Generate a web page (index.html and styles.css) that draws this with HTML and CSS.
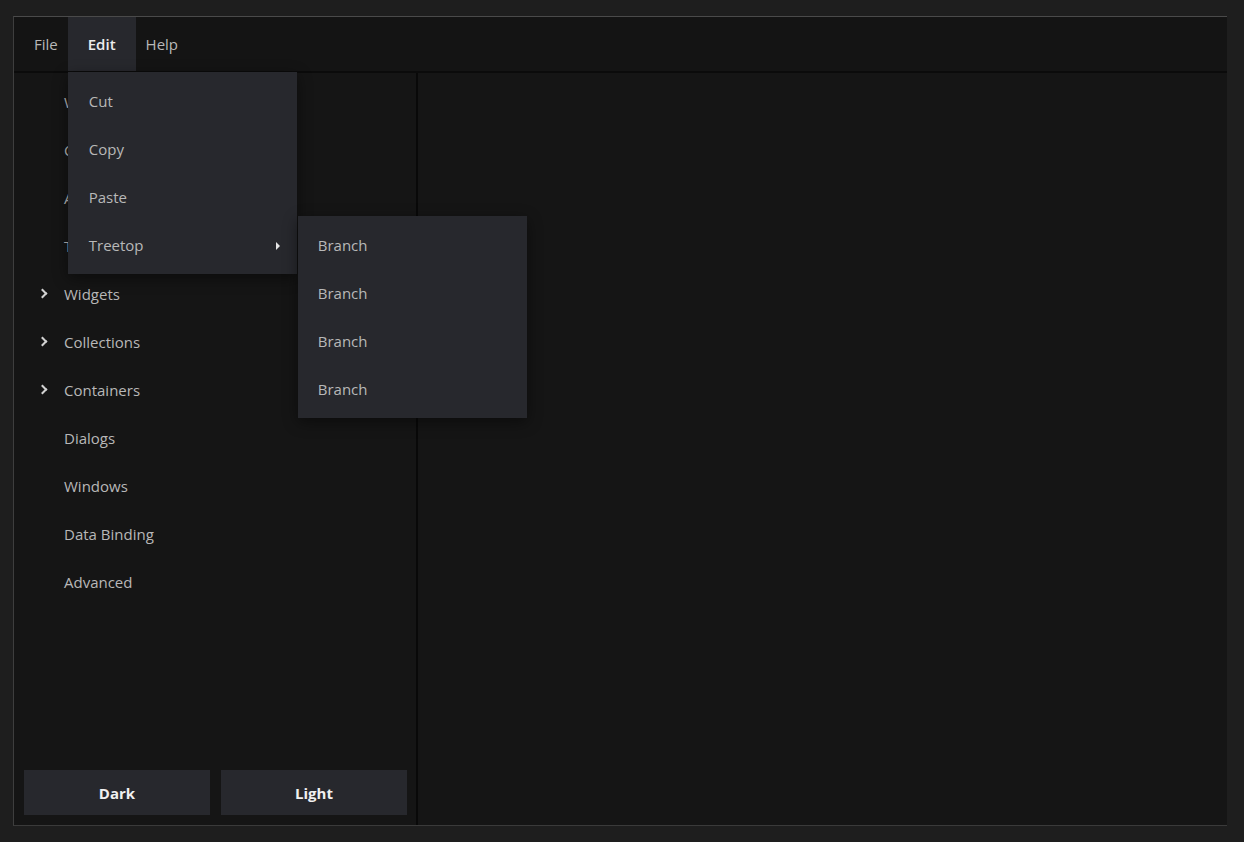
FILE: index.html
```html
<!DOCTYPE html>
<html lang="en">
<head>
    <meta charset="UTF-8">
    <meta name="viewport" content="width=device-width, initial-scale=1.0">
    <title>Gallery</title>
    <link rel="stylesheet" href="styles.css">
</head>
<body>
    <div class="window">
        <div class="menubar">
            <div class="menu-item">File</div>
            <div class="menu-item active">
                Edit
                <div class="dropdown">
                    <div class="drop-item">Cut</div>
                    <div class="drop-item">Copy</div>
                    <div class="drop-item">Paste</div>
                    <div class="drop-item has-sub">
                        Treetop
                        <span class="sub-arrow"></span>
                        <div class="dropdown submenu">
                            <div class="drop-item">Branch</div>
                            <div class="drop-item">Branch</div>
                            <div class="drop-item">Branch</div>
                            <div class="drop-item">Branch</div>
                        </div>
                    </div>
                </div>
            </div>
            <div class="menu-item">Help</div>
        </div>

        <div class="body">
            <div class="sidebar">
                <div class="nav-list">
                    <div class="nav-item">Welcome</div>
                    <div class="nav-item">Controls</div>
                    <div class="nav-item">Animations</div>
                    <div class="nav-item">Typography</div>
                    <div class="nav-item group">Widgets</div>
                    <div class="nav-item group">Collections</div>
                    <div class="nav-item group">Containers</div>
                    <div class="nav-item">Dialogs</div>
                    <div class="nav-item">Windows</div>
                    <div class="nav-item">Data Binding</div>
                    <div class="nav-item">Advanced</div>
                </div>
                <div class="theme-buttons">
                    <button class="theme-btn">Dark</button>
                    <button class="theme-btn">Light</button>
                </div>
            </div>
            <div class="content"></div>
        </div>
    </div>
</body>
</html>
```

FILE: styles.css
```css
body {
    margin: 0;
    background: #1e1e1e;
    padding: 16px 17px 16px 13px;
    font-family: 'Open Sans', 'Noto Sans', sans-serif;
    font-size: 15px;
    color: #b8b8b8;
}

.window {
    height: 808px;
    display: flex;
    flex-direction: column;
    background: #151515;
    border-top: 1px solid #4a4a4a;
    border-left: 1px solid #3e3e3e;
    border-bottom: 1px solid #3a3a3a;
}

.menubar {
    height: 54px;
    display: flex;
    padding-left: 10px;
    background: #141414;
    border-bottom: 2px solid #0b0b0b;
    position: relative;
    z-index: 2;
}

.menu-item {
    position: relative;
    display: flex;
    align-items: center;
    padding: 0 10px 1px;
}

.menu-item.active {
    padding: 0 20px 1px;
    background: #27282d;
    color: #ececec;
    font-weight: 600;
}

.dropdown {
    position: absolute;
    top: 55px;
    left: 0;
    width: 229px;
    padding: 5px 0;
    background: #27282d;
    font-weight: 400;
    color: #b8b8b8;
    box-shadow: 0 4px 14px rgba(0, 0, 0, 0.45);
}

.drop-item {
    position: relative;
    height: 48px;
    display: flex;
    align-items: center;
    padding-left: 21px;
}

.sub-arrow {
    position: absolute;
    right: 17px;
    top: 21px;
    width: 0;
    height: 0;
    border-top: 4px solid transparent;
    border-bottom: 4px solid transparent;
    border-left: 4px solid #e6e6e6;
}

.submenu {
    top: -5px;
    left: 230px;
}

.submenu .drop-item {
    padding-left: 20px;
}

.body {
    flex: 1;
    display: flex;
    min-height: 0;
}

.sidebar {
    width: 402px;
    display: flex;
    flex-direction: column;
    justify-content: space-between;
    border-right: 2px solid #090909;
    padding-bottom: 10px;
}

.nav-list {
    padding-top: 5px;
}

.nav-item {
    position: relative;
    height: 48px;
    display: flex;
    align-items: center;
    padding-left: 50px;
}

.nav-item.group::before {
    content: '';
    position: absolute;
    left: 25px;
    top: 20px;
    width: 5px;
    height: 5px;
    border-top: 2px solid #d2d2d2;
    border-right: 2px solid #d2d2d2;
    transform: rotate(45deg);
}

.theme-buttons {
    display: flex;
    gap: 11px;
    padding: 0 9px 0 10px;
}

.theme-btn {
    flex: 1;
    height: 45px;
    border: none;
    background: #27282d;
    color: #f0f0f0;
    font-family: inherit;
    font-size: 15px;
    font-weight: 700;
}

.content {
    flex: 1;
    background: #151515;
}
```
